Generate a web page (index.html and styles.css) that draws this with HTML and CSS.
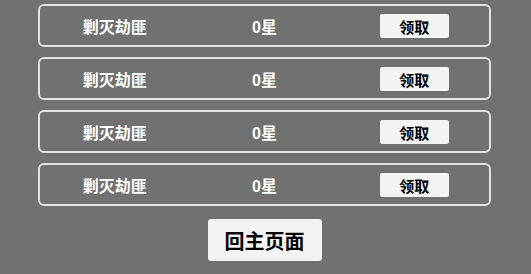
FILE: index.html
```
<!DOCTYPE html>
<html lang="zh-CN">
<head>
<meta charset="utf-8">
<title>任务</title>
<link rel="stylesheet" href="styles.css">
</head>
<body>
<div class="page">
  <div class="list">
    <div class="row"><span class="cell name">剿灭劫匪</span><span class="cell stars">0星</span><span class="cell"><button class="claim">领取</button></span></div>
    <div class="row"><span class="cell name">剿灭劫匪</span><span class="cell stars">0星</span><span class="cell"><button class="claim">领取</button></span></div>
    <div class="row"><span class="cell name">剿灭劫匪</span><span class="cell stars">0星</span><span class="cell"><button class="claim">领取</button></span></div>
    <div class="row"><span class="cell name">剿灭劫匪</span><span class="cell stars">0星</span><span class="cell"><button class="claim">领取</button></span></div>
  </div>
  <div class="footer"><button class="home">回主页面</button></div>
</div>
</body>
</html>
```
FILE: styles.css
```
html, body {
  margin: 0;
  padding: 0;
  background: #717171;
}
body {
  font-family: "Liberation Sans", "Noto Sans CJK SC", sans-serif;
  width: 531px;
  height: 274px;
  overflow: hidden;
}
.page {
  padding-top: 4px;
}
.list {
  margin-left: 38px;
  width: 453px;
  display: flex;
  flex-direction: column;
  gap: 10px;
}
.row {
  box-sizing: border-box;
  height: 43px;
  border: 2px solid #e2e2e2;
  border-radius: 6px;
  display: grid;
  grid-template-columns: 1fr 1fr 1fr;
  align-items: center;
}
.cell {
  display: flex;
  justify-content: center;
  align-items: center;
  color: #ffffff;
  font-weight: bold;
  font-size: 16px;
}
.claim {
  width: 69px;
  height: 24px;
  border: none;
  border-radius: 2px;
  background: #f4f4f4;
  color: #000;
  font-family: "Liberation Sans", "Noto Sans CJK SC", sans-serif;
  font-weight: bold;
  font-size: 15px;
  padding: 0;
  margin-top: 1px;
}
.footer {
  width: 453px;
  margin-left: 38px;
  margin-top: 13px;
  display: flex;
  justify-content: center;
}
.home {
  width: 114px;
  height: 42px;
  border: none;
  border-radius: 3px;
  background: #f4f4f4;
  color: #000;
  font-family: "Liberation Sans", "Noto Sans CJK SC", sans-serif;
  font-weight: bold;
  font-size: 20px;
  padding: 0;
}
```
